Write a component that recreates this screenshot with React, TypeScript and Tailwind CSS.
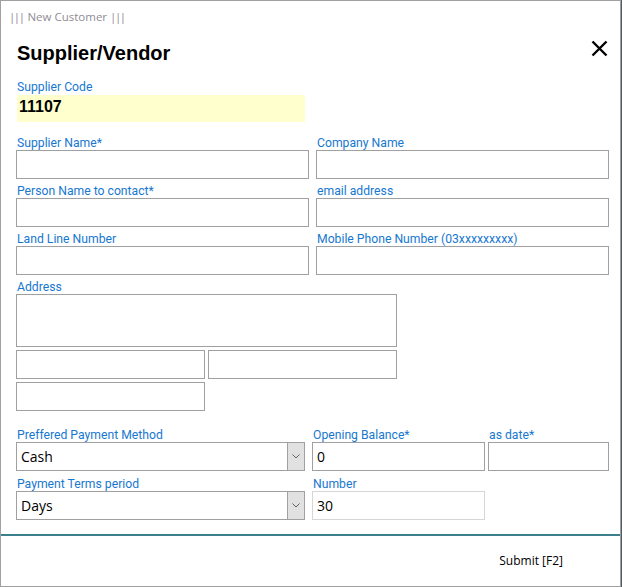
const labelCls = "block h-[14px] leading-[14px] text-[12.2px] text-[#1878cf] pl-px whitespace-nowrap";
const inputCls = "h-[29px] border border-[#a0a0a0] bg-white";
const valueFont = { fontFamily: "'Open Sans', 'Noto Sans', sans-serif" };

const Field = ({ label }: { label: string }) => (
  <div className="flex flex-col">
    <span className={labelCls}>{label}</span>
    <div className={inputCls} />
  </div>
);

const Chevron = () => (
  <svg width="8" height="5" viewBox="0 0 8 5" fill="none">
    <path d="M0.5 0.5 L4 4 L7.5 0.5" stroke="#606060" strokeWidth="1" />
  </svg>
);

const Select = ({ value }: { value: string }) => (
  <div className="h-[29px] border border-[#a0a0a0] bg-white flex">
    <div className="flex-1 flex items-center pl-[4px] text-[14px] text-black" style={valueFont}>
      {value}
    </div>
    <div className="w-[17px] bg-[#e1e1e1] border-l border-[#a0a0a0] flex items-center justify-center">
      <Chevron />
    </div>
  </div>
);

export default function App() {
  return (
    <div className="w-[622px] h-[587px] bg-[#4f5863]" style={{ fontFamily: "Roboto, 'Liberation Sans', sans-serif" }}>
      <div className="w-[621px] h-[587px] bg-white border border-[#a0a0a0] flex flex-col">
        <div
          className="h-[31px] flex items-center pl-[8px] text-[11.5px] text-[#8f8c94]"
          style={{ fontFamily: "'Open Sans', 'Noto Sans', sans-serif" }}
        >
          <span className="tracking-[-1.5px]">|||</span>
          <span className="ml-[4px]">New Customer</span>
          <span className="ml-[3px] tracking-[-1.5px]">|||</span>
        </div>

        <div className="mt-[7px] h-[24px] flex justify-between items-start pl-[16px] pr-[12px]">
          <h1
            className="mt-[2px] text-[20px] leading-[24px] font-bold text-black"
            style={{ fontFamily: "'Liberation Sans', Arial, sans-serif" }}
          >
            Supplier/Vendor
          </h1>
          <svg width="17" height="17" viewBox="0 0 17 17" className="mt-[1px]">
            <path d="M1.5 1.5 L15.5 15.5 M15.5 1.5 L1.5 15.5" stroke="#000" strokeWidth="2.4" />
          </svg>
        </div>

        <div className="pl-[15px] pr-[11px]">
          <div className="mt-[17px]">
            <span className={labelCls}>Supplier Code</span>
            <div
              className="mt-px ml-px w-[288px] h-[27px] bg-[#ffffcd] flex items-center pl-[2px] pb-[4px] text-[16px] font-bold text-black"
              style={{ fontFamily: "'Liberation Sans', Arial, sans-serif" }}
            >
              11107
            </div>
          </div>

          <div className="mt-[14px] grid grid-cols-[293px_293px] gap-x-[7px] gap-y-[5px]">
            <Field label="Supplier Name*" />
            <Field label="Company Name" />
            <Field label="Person Name to contact*" />
            <Field label="email address" />
            <Field label="Land Line Number" />
            <Field label="Mobile Phone Number (03xxxxxxxxx)" />
          </div>

          <div className="mt-[5px] w-[381px] flex flex-col">
            <span className={labelCls}>Address</span>
            <div className="h-[53px] border border-[#a0a0a0]" />
            <div className="mt-[3px] grid grid-cols-[189px_189px] gap-[3px]">
              <div className={inputCls} />
              <div className={inputCls} />
              <div className={inputCls} />
            </div>
          </div>

          <div className="mt-[17px] grid grid-cols-[289px_7px_173px_3px_121px]">
            <div className="flex flex-col">
              <span className={labelCls}>Preffered Payment Method</span>
              <Select value="Cash" />
            </div>
            <div />
            <div className="flex flex-col">
              <span className={labelCls}>Opening Balance*</span>
              <div className={`${inputCls} flex items-center pl-[4px] text-[14px] text-black`} style={valueFont}>
                0
              </div>
            </div>
            <div />
            <div className="flex flex-col">
              <span className={labelCls}>as date*</span>
              <div className={inputCls} />
            </div>

            <div className="flex flex-col mt-[6px]">
              <span className={labelCls}>Payment Terms period</span>
              <Select value="Days" />
            </div>
            <div />
            <div className="flex flex-col mt-[6px]">
              <span className={labelCls}>Number</span>
              <div
                className="h-[29px] border border-[#d6d6d6] bg-white flex items-center pl-[4px] text-[14px] text-black"
                style={valueFont}
              >
                30
              </div>
            </div>
          </div>
        </div>

        <div className="mt-[14px] h-[2px] bg-[#3b7f8c]" />

        <div className="flex-1 flex items-center justify-end pr-[57px]">
          <span className="text-[12px] text-black" style={valueFont}>
            Submit [F2]
          </span>
        </div>
      </div>
    </div>
  );
}
